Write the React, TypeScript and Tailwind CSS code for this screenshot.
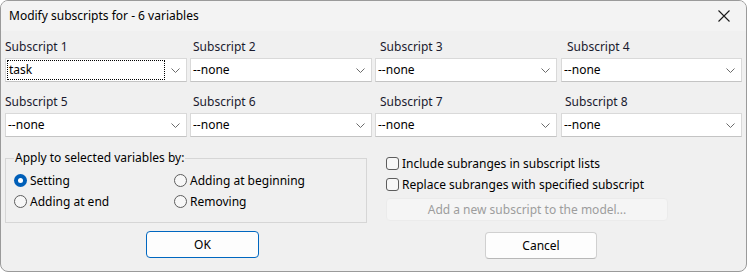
import { useState } from "react";

const FONT = "font-['Segoe_UI','Noto_Sans','Open_Sans',sans-serif]";

type Combo = { label: string; value: string; labelOffset: string };

const combos: Combo[] = [
  { label: "Subscript 1", value: "task", labelOffset: "pl-0" },
  { label: "Subscript 2", value: "--none", labelOffset: "pl-[3px]" },
  { label: "Subscript 3", value: "--none", labelOffset: "pl-[5px]" },
  { label: "Subscript 4", value: "--none", labelOffset: "pl-[6px]" },
  { label: "Subscript 5", value: "--none", labelOffset: "pl-0" },
  { label: "Subscript 6", value: "--none", labelOffset: "pl-[3px]" },
  { label: "Subscript 7", value: "--none", labelOffset: "pl-[5px]" },
  { label: "Subscript 8", value: "--none", labelOffset: "pl-[4px]" },
];

function Chevron() {
  return (
    <svg width="9" height="5" viewBox="0 0 9 5" className="shrink-0">
      <path d="M0.5 0.5 L4.5 4.5 L8.5 0.5" fill="none" stroke="#6b6b6b" strokeWidth="1" />
    </svg>
  );
}

function ComboBox({ value, focused }: { value: string; focused?: boolean }) {
  return (
    <div className="flex h-[24px] items-center border border-[#d9d9d9] border-b-[#c4c4c4] bg-white pr-[6px]">
      {focused ? (
        <div className="ml-[1px] mr-[6px] flex h-[20px] flex-1 items-center border border-dotted border-black pl-[1px] text-[12px] text-black">
          {value}
        </div>
      ) : (
        <div className="flex-1 pl-[2px] text-[12px] text-black">{value}</div>
      )}
      <Chevron />
    </div>
  );
}

function Radio({ label, checked }: { label: string; checked?: boolean }) {
  return (
    <div className="flex h-[21px] items-center gap-[3px]">
      {checked ? (
        <span className="flex h-[13px] w-[13px] items-center justify-center rounded-full bg-[#005fb8]">
          <span className="h-[5px] w-[5px] rounded-full bg-white" />
        </span>
      ) : (
        <span className="h-[13px] w-[13px] rounded-full border border-[#5d5d5d] bg-[#f7f7f7]" />
      )}
      <span className="text-[12px] text-black">{label}</span>
    </div>
  );
}

function Check({ label }: { label: string }) {
  return (
    <div className="flex h-[21px] items-center gap-[3px]">
      <span className="h-[13px] w-[13px] rounded-[3px] border border-[#5d5d5d] bg-[#f7f7f7]" />
      <span className="text-[12px] text-black">{label}</span>
    </div>
  );
}

export default function App() {
  const [mode] = useState("setting");

  return (
    <div className={`h-[273px] w-[748px] bg-white ${FONT}`}>
      <div className="flex h-[272px] w-[747px] flex-col overflow-hidden rounded-[8px] border border-[#9a9a9a] bg-[#f0f0f0]">
        <div className="flex h-[30px] shrink-0 items-center justify-between bg-[#f3f3f3] pl-[8px] pr-[16px]">
          <span className="text-[12px] text-black">Modify subscripts for - 6 variables</span>
          <svg width="12" height="12" viewBox="0 0 12 12">
            <path d="M0.5 0.5 L11.5 11.5 M11.5 0.5 L0.5 11.5" stroke="#1a1a1a" strokeWidth="1.1" />
          </svg>
        </div>

        <div className="grid grid-cols-[182px_182px_182px_182px] gap-x-[3px] gap-y-[12px] pl-[4px] pt-[8px]">
          {combos.map((c, i) => (
            <div key={c.label} className={i % 4 === 3 ? "ml-[1px]" : ""}>
              <div className={`h-[16px] text-[12px] leading-[16px] text-[#1a1a2e] ${c.labelOffset}`}>{c.label}</div>
              <div className="mt-[3px]">
                <ComboBox value={c.value} focused={i === 0} />
              </div>
            </div>
          ))}
        </div>

        <div className="mt-[21px] flex pl-[4px]">
          <div className="flex w-[362px] flex-col">
            <div className="relative h-[65px] w-[362px] border border-[#d6d6d6]">
              <span className="absolute -top-[9px] left-[8px] bg-[#f0f0f0] px-[1px] text-[12px] leading-[16px] text-black">
                Apply to selected variables by:
              </span>
              <div className="grid grid-cols-[160px_1fr] pl-[8px] pt-[11px]">
                <Radio label="Setting" checked={mode === "setting"} />
                <Radio label="Adding at beginning" />
                <Radio label="Adding at end" />
                <Radio label="Removing" />
              </div>
            </div>
            <button className="ml-[141px] mt-[8px] h-[27px] w-[113px] rounded-[4px] border border-[#0067c0] bg-[#fdfdfd] text-[12px] text-black">
              OK
            </button>
          </div>

          <div className="ml-[19px] flex w-[282px] flex-col">
            <div className="-mt-[5px] flex flex-col">
              <Check label="Include subranges in subscript lists" />
              <Check label="Replace subranges with specified subscript" />
            </div>
            <div className="mt-[3px] flex h-[23px] w-[282px] items-center justify-center rounded-[4px] border border-[#ebebeb] bg-[#f5f5f5] text-[12px] text-[#9d9d9d]">
              Add a new subscript to the model...
            </div>
            <button className="ml-[99px] mt-[11px] h-[27px] w-[112px] rounded-[4px] border border-[#d0d0d0] border-b-[#b8b8b8] bg-[#fdfdfd] text-[12px] text-black">
              Cancel
            </button>
          </div>
        </div>
      </div>
    </div>
  );
}
